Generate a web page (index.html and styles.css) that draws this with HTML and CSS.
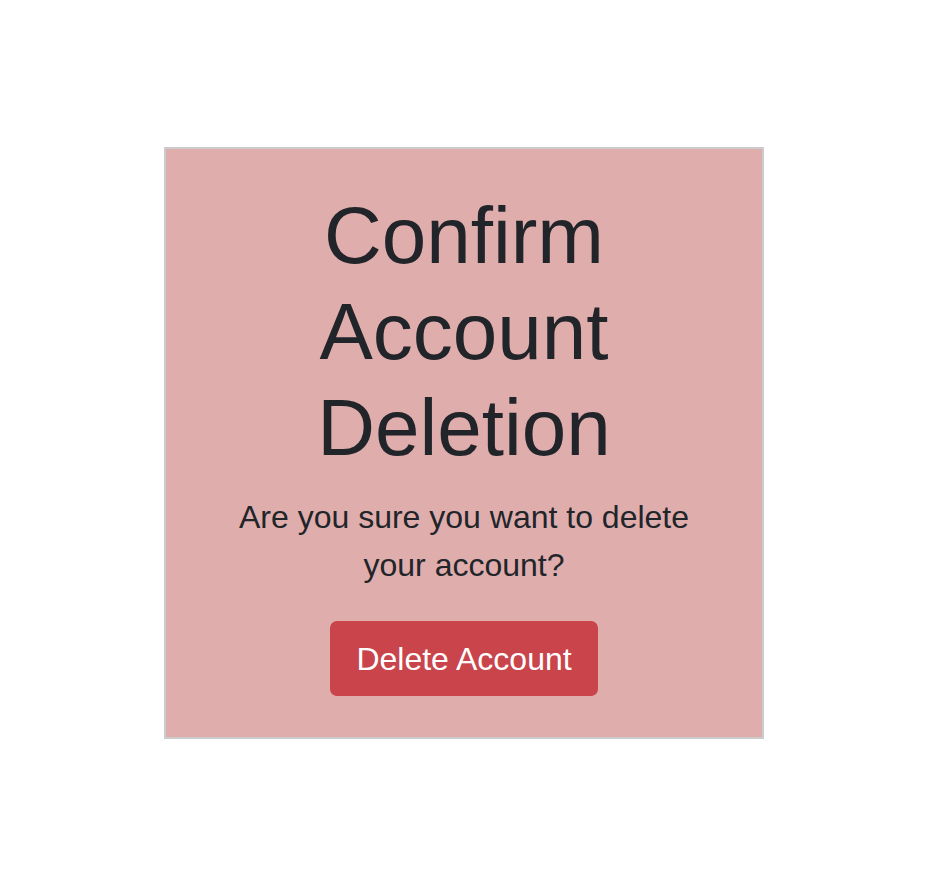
FILE: index.html
```html
<!DOCTYPE html>
<html>
<head>
<meta charset="utf-8">
<link rel="stylesheet" href="styles.css">
</head>
<body>
<div class="page">
  <div class="card">
    <h1 class="title">Confirm Account Deletion</h1>
    <p class="message">Are you sure you want to delete your account?</p>
    <button class="btn-danger">Delete Account</button>
  </div>
</div>
</body>
</html>
```
FILE: styles.css
```css
html, body {
  margin: 0;
  padding: 0;
  background: #ffffff;
}
.page {
  display: flex;
  justify-content: center;
  padding-top: 147px;
  font-family: "Liberation Sans", Arial, sans-serif;
  color: #212529;
}
.card {
  width: 600px;
  box-sizing: border-box;
  border: 2px solid #cccccc;
  background: #e0adad;
  display: flex;
  flex-direction: column;
  align-items: center;
  text-align: center;
  padding: 39px 40px 41px;
}
.title {
  margin: 0;
  font-size: 80px;
  font-weight: 400;
  line-height: 96px;
  width: 480px;
}
.message {
  margin: 17px 0 0;
  font-size: 32px;
  line-height: 48px;
  width: 480px;
}
.btn-danger {
  margin-top: 32px;
  font-family: "Liberation Sans", Arial, sans-serif;
  font-size: 32px;
  line-height: 48px;
  color: #ffffff;
  background: #c9444b;
  border: none;
  border-radius: 7px;
  padding: 13.5px 20px;
  width: 268px;
}
```
